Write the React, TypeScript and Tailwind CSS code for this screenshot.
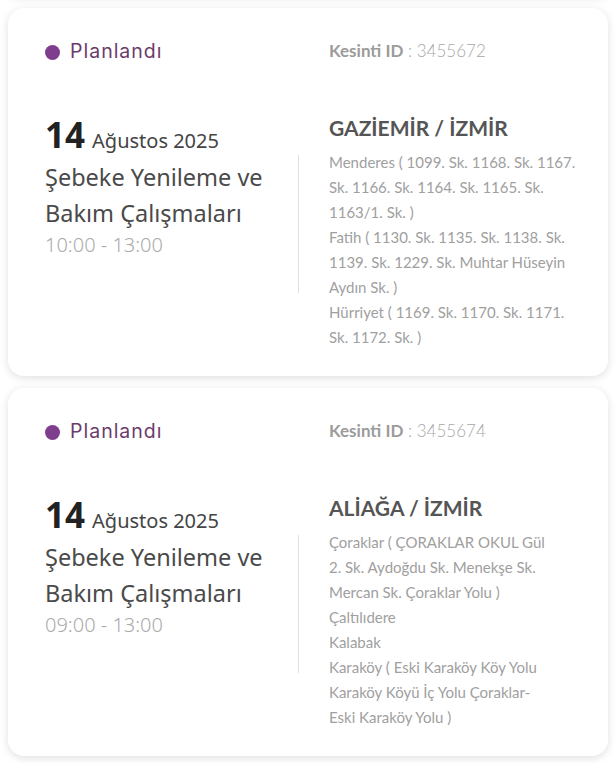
import React from 'react';

interface Outage {
  id: string;
  day: string;
  monthYear: string;
  title: string[];
  hours: string;
  district: string;
  streets: string[];
}

const outages: Outage[] = [
  {
    id: '3455672',
    day: '14',
    monthYear: 'Ağustos 2025',
    title: ['Şebeke Yenileme ve', 'Bakım Çalışmaları'],
    hours: '10:00 - 13:00',
    district: 'GAZİEMİR / İZMİR',
    streets: [
      'Menderes ( 1099. Sk. 1168. Sk. 1167.',
      'Sk. 1166. Sk. 1164. Sk. 1165. Sk.',
      '1163/1. Sk. )',
      'Fatih ( 1130. Sk. 1135. Sk. 1138. Sk.',
      '1139. Sk. 1229. Sk. Muhtar Hüseyin',
      'Aydın Sk. )',
      'Hürriyet ( 1169. Sk. 1170. Sk. 1171.',
      'Sk. 1172. Sk. )',
    ],
  },
  {
    id: '3455674',
    day: '14',
    monthYear: 'Ağustos 2025',
    title: ['Şebeke Yenileme ve', 'Bakım Çalışmaları'],
    hours: '09:00 - 13:00',
    district: 'ALİAĞA / İZMİR',
    streets: [
      'Çoraklar ( ÇORAKLAR OKUL Gül',
      '2. Sk. Aydoğdu Sk. Menekşe Sk.',
      'Mercan Sk. Çoraklar Yolu )',
      'Çaltılıdere',
      'Kalabak',
      'Karaköy ( Eski Karaköy Köy Yolu',
      'Karaköy Köyü İç Yolu Çoraklar-',
      'Eski Karaköy Yolu )',
    ],
  },
];

const geo = { fontFamily: 'Lato, "Liberation Sans", sans-serif' };
const inter = { fontFamily: 'Inter, Lato, sans-serif' };
const ubu = { fontFamily: '"Noto Sans", "Open Sans", sans-serif' };

const OutageCard: React.FC<{ item: Outage }> = ({ item }) => (
  <div className="bg-white rounded-[16px] shadow-[0_2px_8px_rgba(0,0,0,0.13)] pl-[37px] pr-[24px] pt-[32px] pb-[26px]">
    <div className="grid grid-cols-[253px_1px_1fr]">
      <div className="flex items-center gap-[10px] h-[24px]">
        <span className="w-[15px] h-[15px] rounded-full bg-[#7e3d8d]" />
        <span className="text-[19.5px] tracking-[1px] text-[#6b3b6b]" style={inter}>Planlandı</span>
      </div>
      <div />
      <div className="pl-[30px] flex items-center h-[22px] text-[17px] text-[#9b9b9b]" style={geo}>
        <span className="font-bold">Kesinti ID</span>
        <span className="font-light text-[#a8a8a8]">&nbsp;: {item.id}</span>
      </div>
    </div>

    <div className="grid grid-cols-[253px_1px_1fr] mt-[50px]">
      <div className="pt-[3px]" style={ubu}>
        <div className="flex items-baseline gap-[7px] h-[36px]">
          <span className="text-[35px] font-bold text-[#222] leading-[36px]">{item.day}</span>
          <span className="text-[20px] text-[#444] leading-[36px]">{item.monthYear}</span>
        </div>
        <div className="mt-[6px] text-[23.5px] leading-[36px] text-[#4a4a4a]">
          {item.title.map((t) => (
            <div key={t} className="whitespace-nowrap">{t}</div>
          ))}
        </div>
        <div className="text-[20px] leading-[28px] font-light text-[#ababab]">{item.hours}</div>
      </div>

      <div className="self-start mt-[41px] h-[138px] bg-[#e2e2e2]" />

      <div className="pl-[30px]" style={geo}>
        <div className="text-[21px] font-bold leading-[28px] text-[#555]">{item.district}</div>
        <div className="mt-[8px] text-[15px] leading-[25px] text-[#a0a0a0]">
          {item.streets.map((s) => (
            <div key={s} className="whitespace-nowrap">{s}</div>
          ))}
        </div>
      </div>
    </div>
  </div>
);

export default function App() {
  return (
    <div className="bg-white min-h-screen w-[616px] px-[8px] flex flex-col gap-[12px] overflow-hidden">
      <div className="-mt-[14px] h-[10px] bg-white rounded-b-[16px] shadow-[0_2px_8px_rgba(0,0,0,0.13)]" />
      {outages.map((o) => (
        <OutageCard key={o.id} item={o} />
      ))}
    </div>
  );
}
